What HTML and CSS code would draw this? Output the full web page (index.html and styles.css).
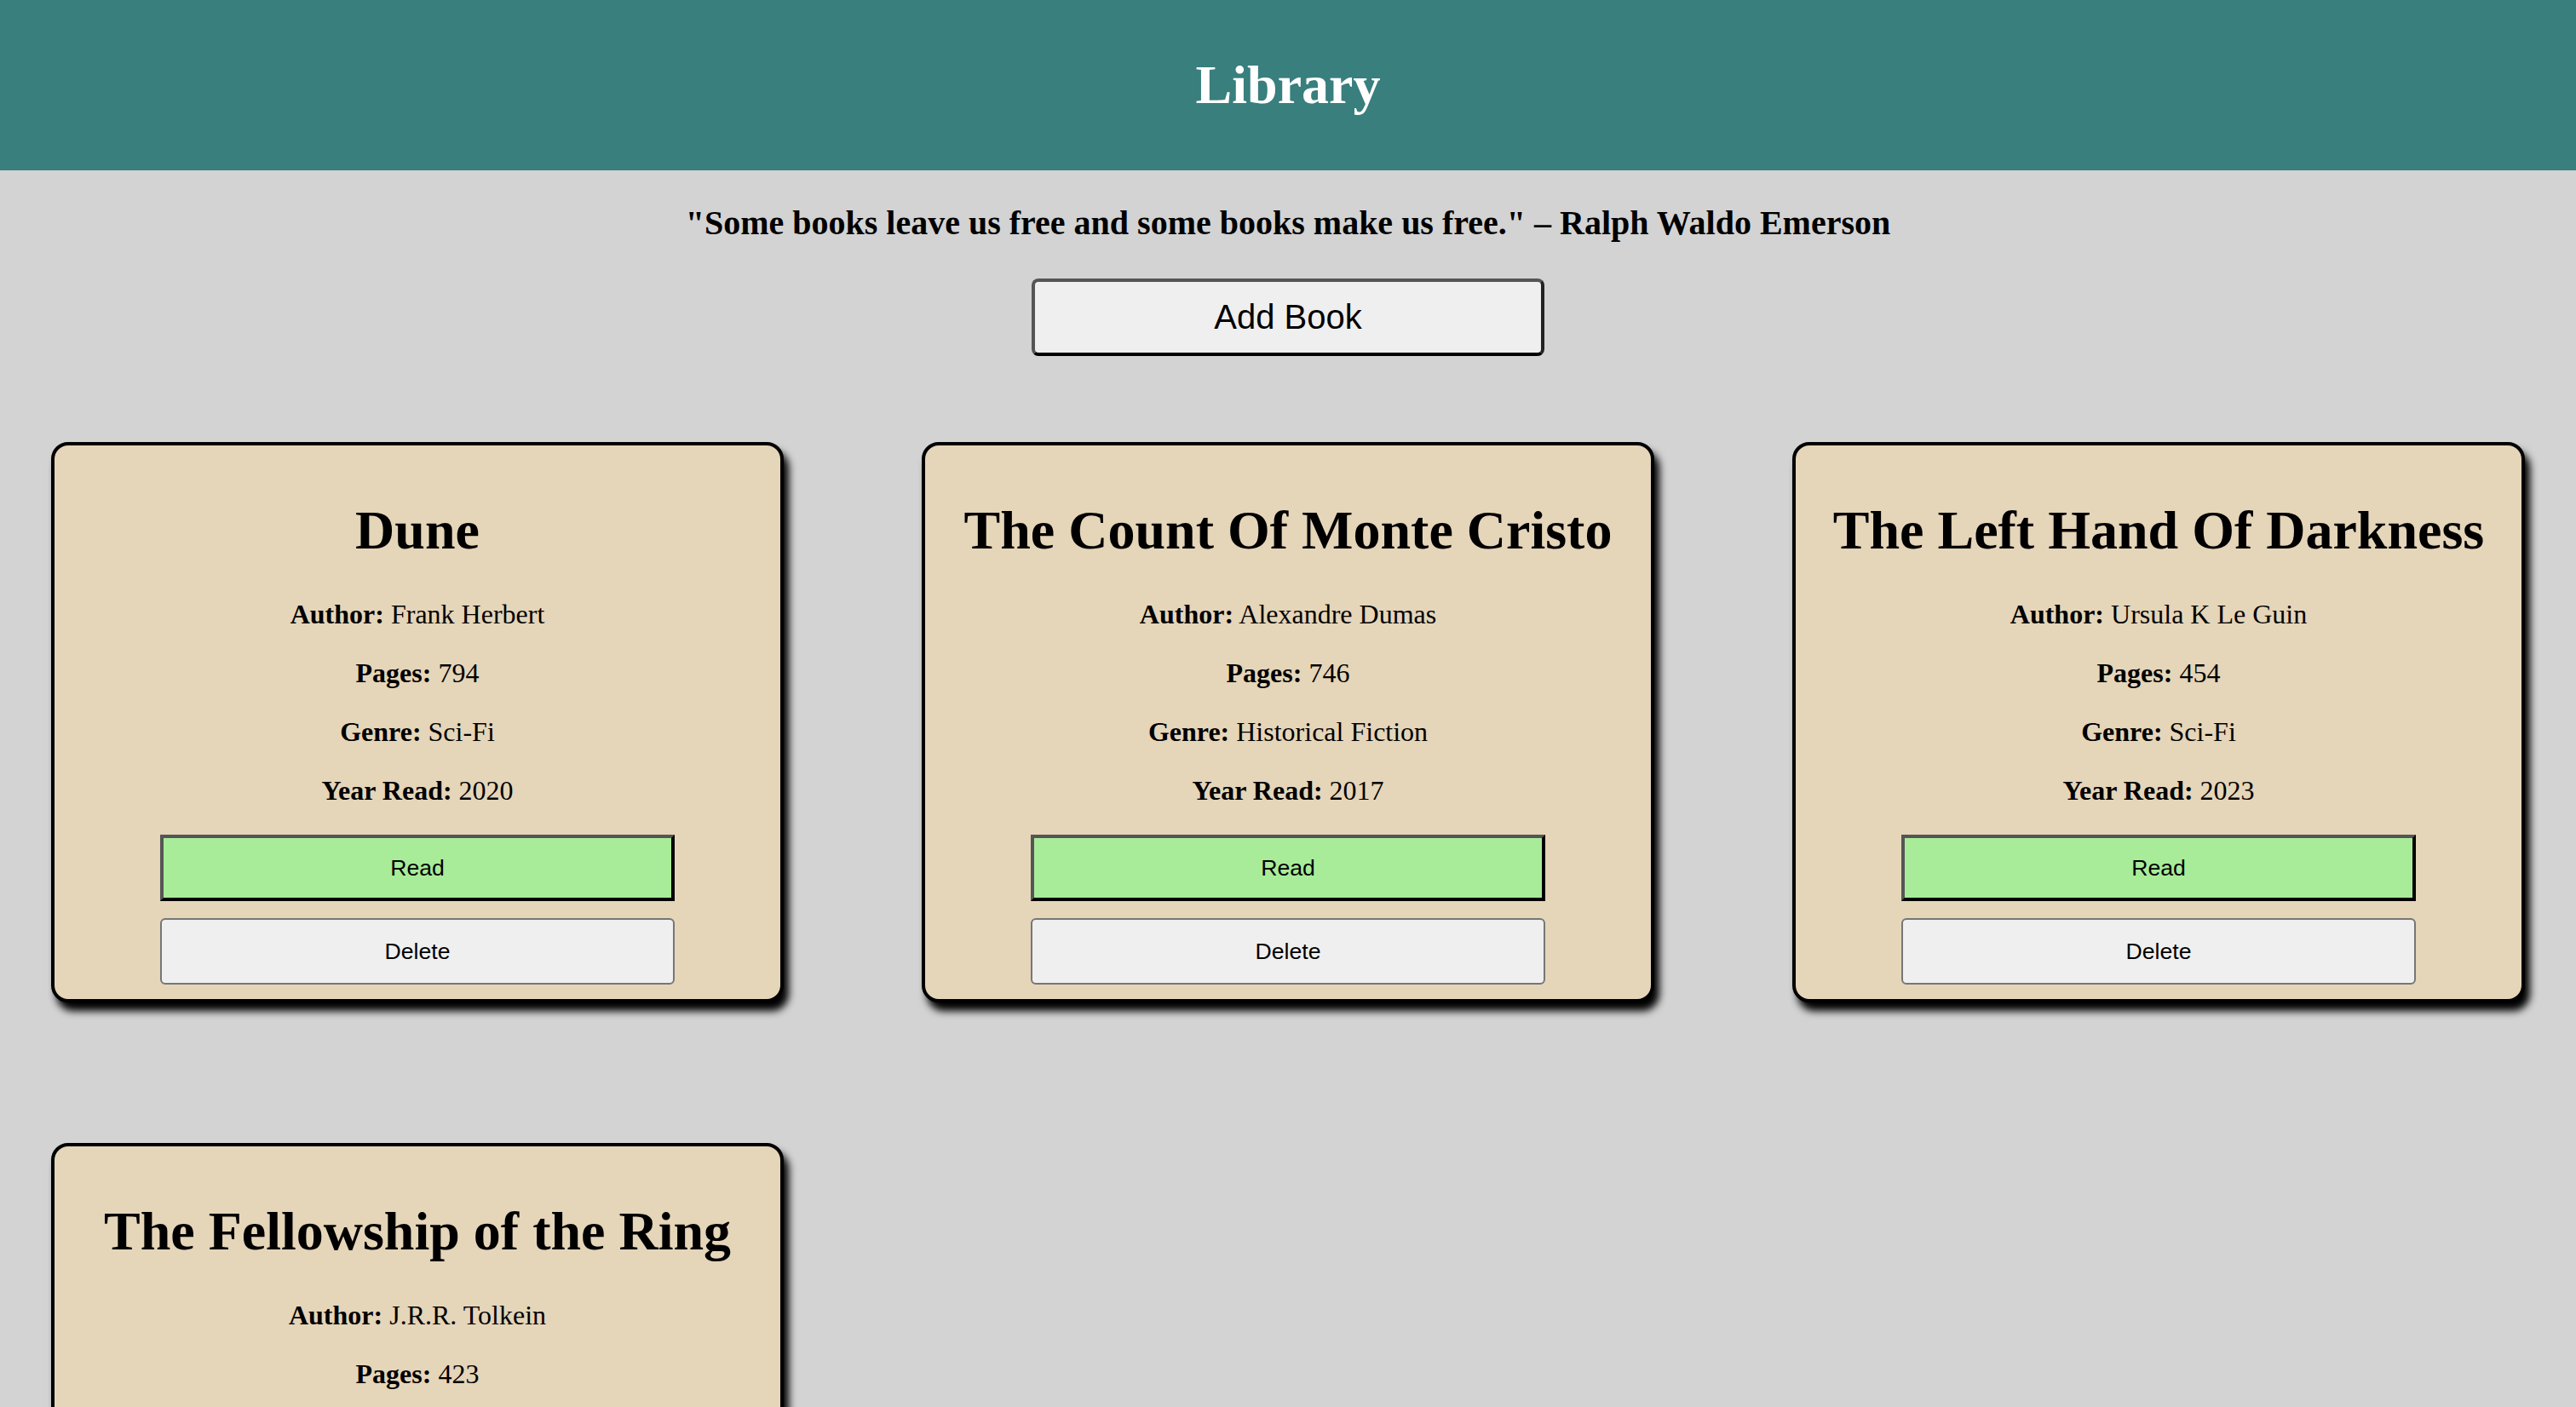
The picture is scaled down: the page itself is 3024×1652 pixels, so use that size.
FILE: index.html
```html
<!DOCTYPE html>
<html lang="en">
<head>
<meta charset="utf-8">
<title>Library</title>
<link rel="stylesheet" href="styles.css">
</head>
<body>
<header class="site-header">
  <h1 class="site-title">Library</h1>
</header>
<main class="main">
  <h3 class="quote">"Some books leave us free and some books make us free." – Ralph Waldo Emerson</h3>
  <div class="actions">
    <button class="add-btn" type="button">Add Book</button>
  </div>
  <section class="books">
    <article class="card">
      <h1 class="card-title">Dune</h1>
      <p class="field"><b>Author:</b> Frank Herbert</p>
      <p class="field"><b>Pages:</b> 794</p>
      <p class="field"><b>Genre:</b> Sci-Fi</p>
      <p class="field"><b>Year Read:</b> 2020</p>
      <button class="btn btn-read" type="button">Read</button>
      <button class="btn btn-delete" type="button">Delete</button>
    </article>
    <article class="card">
      <h1 class="card-title">The Count Of Monte Cristo</h1>
      <p class="field"><b>Author:</b> Alexandre Dumas</p>
      <p class="field"><b>Pages:</b> 746</p>
      <p class="field"><b>Genre:</b> Historical Fiction</p>
      <p class="field"><b>Year Read:</b> 2017</p>
      <button class="btn btn-read" type="button">Read</button>
      <button class="btn btn-delete" type="button">Delete</button>
    </article>
    <article class="card">
      <h1 class="card-title">The Left Hand Of Darkness</h1>
      <p class="field"><b>Author:</b> Ursula K Le Guin</p>
      <p class="field"><b>Pages:</b> 454</p>
      <p class="field"><b>Genre:</b> Sci-Fi</p>
      <p class="field"><b>Year Read:</b> 2023</p>
      <button class="btn btn-read" type="button">Read</button>
      <button class="btn btn-delete" type="button">Delete</button>
    </article>
    <article class="card">
      <h1 class="card-title">The Fellowship of the Ring</h1>
      <p class="field"><b>Author:</b> J.R.R. Tolkein</p>
      <p class="field"><b>Pages:</b> 423</p>
      <p class="field"><b>Genre:</b> Fantasy</p>
      <p class="field"><b>Year Read:</b> 2021</p>
      <button class="btn btn-read" type="button">Read</button>
      <button class="btn btn-delete" type="button">Delete</button>
    </article>
  </section>
</main>
</body>
</html>
```
FILE: styles.css
```css
html, body {
  margin: 0;
  padding: 0;
}
body {
  background: #d3d3d3;
  font-family: "Liberation Serif", "Times New Roman", serif;
  color: #000;
  font-size: 32px;
}
.site-header {
  background: #387f7e;
  padding: 20px 0;
  text-align: center;
}
.site-title {
  margin: 43px 0;
  font-size: 64px;
  line-height: 74px;
  color: #fff;
  font-weight: bold;
}
.main {
  padding: 0 60px 60px;
}
.quote {
  text-align: center;
  font-size: 40px;
  line-height: 46px;
  margin: 39px 0 0;
  font-weight: bold;
}
.actions {
  display: flex;
  justify-content: center;
  margin-top: 42px;
}
.add-btn {
  width: 602px;
  height: 91px;
  font-family: "Liberation Sans", Arial, sans-serif;
  font-size: 40px;
  background: #efefef;
  color: #000;
  border: 4px solid #555;
  border-bottom-color: #000;
  border-right-color: #222;
  border-radius: 8px;
  padding: 0;
}
.books {
  display: grid;
  grid-template-columns: repeat(3, 860px);
  column-gap: 162px;
  row-gap: 165px;
  margin-top: 101px;
}
.card {
  background: #e5d5b9;
  border: 4px solid #000;
  border-radius: 20px;
  box-shadow: 6px 10px 10px #000;
  padding: 20px 20px 17px;
  display: flex;
  flex-direction: column;
  align-items: center;
  text-align: center;
}
.card-title {
  font-size: 64px;
  line-height: 74px;
  margin: 43px 0;
  font-weight: bold;
}
.field {
  margin: 0 0 32px;
  font-size: 32px;
  line-height: 37px;
}
.btn {
  width: 604px;
  height: 78px;
  font-family: "Liberation Sans", Arial, sans-serif;
  font-size: 26.67px;
  color: #000;
  padding: 0;
}
.btn-read {
  background: #a8ec99;
  border: 4px solid #555;
  border-bottom-color: #000;
  border-right-color: #000;
  margin-top: 1px;
}
.btn-delete {
  background: #efefef;
  border: 2px solid #767676;
  border-radius: 6px;
  margin-top: 20px;
}
```
